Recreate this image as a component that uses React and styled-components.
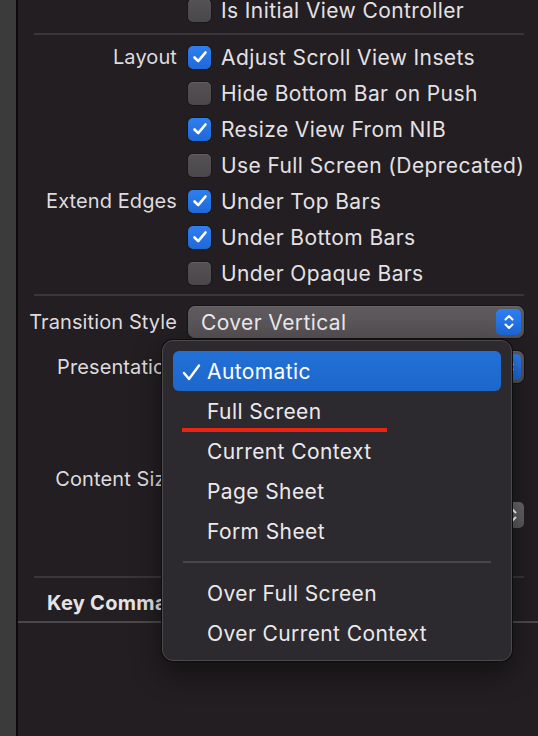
import React from "react";
import styled, { createGlobalStyle } from "styled-components";

const GlobalStyle = createGlobalStyle`
  html, body {
    margin: 0;
    padding: 0;
    background: #221e21;
  }
  body {
    font-family: Inter, "Noto Sans", "Liberation Sans", sans-serif;
    -webkit-font-smoothing: antialiased;
  }
`;

const Page = styled.div`
  display: flex;
  width: 538px;
  height: 736px;
  overflow: hidden;
  position: relative;
`;

const Gutter = styled.div`
  width: 16px;
  flex-shrink: 0;
  background: #3b3b3b;
  border-right: 2px solid #0c0b0c;
`;

const Panel = styled.div`
  flex: 1;
  display: flex;
  flex-direction: column;
  background: #221e21;
  color: #e4e1e4;
  font-size: 21px;
  letter-spacing: 0.4px;
`;

const Row = styled.div`
  display: grid;
  grid-template-columns: 159px 1fr;
  column-gap: 11px;
  align-items: center;
  height: ${props => props.$h || 36}px;
  margin-top: ${props => props.$mt || 0}px;
  padding-right: 16px;
`;

const Label = styled.div`
  text-align: right;
  white-space: nowrap;
  color: #dedbde;
  font-size: 20px;
  letter-spacing: 0.1px;
  margin-top: -1px;
`;

const Check = styled.label`
  display: flex;
  align-items: center;
  gap: 10px;
  white-space: nowrap;
`;

const Box = styled.span`
  width: 23px;
  height: 23px;
  border-radius: 5px;
  flex-shrink: 0;
  display: flex;
  align-items: center;
  justify-content: center;
  box-sizing: border-box;
  background: ${props => props.$on
    ? "linear-gradient(#2f7ff0, #1f68d8)"
    : "linear-gradient(#555255, #4a474a)"};
  box-shadow: ${props => props.$on
    ? "0 0 0 1px rgba(0,0,0,0.25)"
    : "inset 0 1px 0 rgba(255,255,255,0.08), 0 0 0 1px rgba(0,0,0,0.2)"};
`;

const Separator = styled.div`
  height: 2px;
  background: #393538;
  margin: ${props => props.$m || "0 16px"};
`;

const Popup = styled.div`
  height: 32px;
  border-radius: 7px;
  background: linear-gradient(#5e5a5d, #545053);
  box-shadow: 0 0 0 1px rgba(0,0,0,0.35), inset 0 1px 0 rgba(255,255,255,0.08);
  display: flex;
  align-items: center;
  justify-content: space-between;
  padding: 0 3px 0 13px;
  color: #ebe8eb;
`;

const Stepper = styled.div`
  width: 25px;
  height: 26px;
  border-radius: 5px;
  background: ${props => props.$gray
    ? "linear-gradient(#6a676a, #5a575a)"
    : "linear-gradient(#2f7ff0, #1d66d6)"};
  display: flex;
  align-items: center;
  justify-content: center;
`;

const FieldRow = styled.div`
  display: flex;
  justify-content: flex-end;
  align-items: center;
  gap: 8px;
`;

const Field = styled.div`
  width: 110px;
  height: 28px;
  border-radius: 4px;
  background: #3a3639;
`;

const SectionHeader = styled.div`
  height: 36px;
  margin-top: 7px;
  display: flex;
  align-items: center;
  padding-left: 29px;
  font-size: 20px;
  font-weight: 700;
  color: #e6e3e6;
  letter-spacing: 0.3px;
`;

const FullRule = styled.div`
  height: 2px;
  background: #4c494c;
`;

const Menu = styled.div`
  position: absolute;
  left: 162px;
  top: 340px;
  width: 350px;
  height: 321px;
  box-sizing: border-box;
  padding: 10px 10px 9px;
  border-radius: 11px;
  background: #2c2a2e;
  border: 1px solid #4b494c;
  box-shadow: 0 0 0 1px #0e0d0e, 0 12px 30px rgba(0,0,0,0.45);
  display: flex;
  flex-direction: column;
  color: #ece9ec;
  font-size: 21px;
  letter-spacing: 0.4px;
`;

const MenuItem = styled.div`
  position: relative;
  height: 40px;
  flex-shrink: 0;
  display: flex;
  align-items: center;
  padding-left: 34px;
  border-radius: 6px;
  background: ${props => props.$active ? "linear-gradient(#2270d6, #1d67cc)" : "transparent"};
  color: ${props => props.$active ? "#ffffff" : "#ece9ec"};
  white-space: nowrap;
`;

const Tick = styled.span`
  position: absolute;
  left: 9px;
  top: 11px;
  width: 19px;
  height: 19px;
`;

const Underline = styled.span`
  position: absolute;
  left: 9px;
  top: 37px;
  width: 205px;
  height: 4px;
  background: #ea2410;
`;

const MenuSeparator = styled.div`
  height: 2px;
  flex-shrink: 0;
  background: #4a474b;
  margin: 10px 10px 10px;
`;

function CheckIcon() {
  return (
    <svg width="16" height="14" viewBox="0 0 16 14">
      <path d="M2.5 7.5 L6.2 11.2 L13.5 2.5" fill="none" stroke="#fff" strokeWidth="2.6" strokeLinecap="round" strokeLinejoin="round" />
    </svg>
  );
}

function UpDown({ color = "#fff" }) {
  return (
    <svg width="12" height="18" viewBox="0 0 12 18">
      <path d="M2.5 6.5 L6 3 L9.5 6.5 M2.5 11.5 L6 15 L9.5 11.5" fill="none" stroke={color} strokeWidth="2" strokeLinecap="round" strokeLinejoin="round" />
    </svg>
  );
}

function CheckRow({ label, text, on, mt }) {
  return (
    <Row $mt={mt}>
      <Label>{label}</Label>
      <Check>
        <Box $on={on}>{on && <CheckIcon />}</Box>
        {text}
      </Check>
    </Row>
  );
}

const menuTop = ["Automatic", "Full Screen", "Current Context", "Page Sheet", "Form Sheet"];
const menuBottom = ["Over Full Screen", "Over Current Context"];

export default function App() {
  return (
    <>
      <GlobalStyle />
      <Page>
        <Gutter />
        <Panel>
          <CheckRow mt={-8} text="Is Initial View Controller" />
          <Separator $m="5px 16px 4px" />
          <CheckRow label="Layout" text="Adjust Scroll View Insets" on />
          <CheckRow text="Hide Bottom Bar on Push" />
          <CheckRow text="Resize View From NIB" on />
          <CheckRow text="Use Full Screen (Deprecated)" />
          <CheckRow label="Extend Edges" text="Under Top Bars" on />
          <CheckRow text="Under Bottom Bars" on />
          <CheckRow text="Under Opaque Bars" />
          <Separator $m="3px 16px 6px" />
          <Row $h={40}>
            <Label>Transition Style</Label>
            <Popup>
              Cover Vertical
              <Stepper><UpDown /></Stepper>
            </Popup>
          </Row>
          <Row $h={40} $mt={5}>
            <Label>Presentation</Label>
            <Popup>
              <span />
              <Stepper><UpDown /></Stepper>
            </Popup>
          </Row>
          <CheckRow />
          <CheckRow />
          <Row $mt={2}>
            <Label>Content Size</Label>
            <Check>
              <Box />
            </Check>
          </Row>
          <Row>
            <span />
            <FieldRow>
              <Field />
              <Stepper $gray><UpDown /></Stepper>
            </FieldRow>
          </Row>
          <Separator $m="43px 16px 0" />
          <SectionHeader>Key Commands</SectionHeader>
          <FullRule />
        </Panel>
        <Menu>
          {menuTop.map((item, i) => (
            <MenuItem key={item} $active={i === 0}>
              {i === 0 && (
                <Tick>
                  <svg width="19" height="19" viewBox="0 0 19 19">
                    <path d="M2 10 L7 16 L17 2.5" fill="none" stroke="#fff" strokeWidth="2.4" strokeLinecap="round" strokeLinejoin="round" />
                  </svg>
                </Tick>
              )}
              {item}
              {item === "Full Screen" && <Underline />}
            </MenuItem>
          ))}
          <MenuSeparator />
          {menuBottom.map(item => (
            <MenuItem key={item}>{item}</MenuItem>
          ))}
        </Menu>
      </Page>
    </>
  );
}
